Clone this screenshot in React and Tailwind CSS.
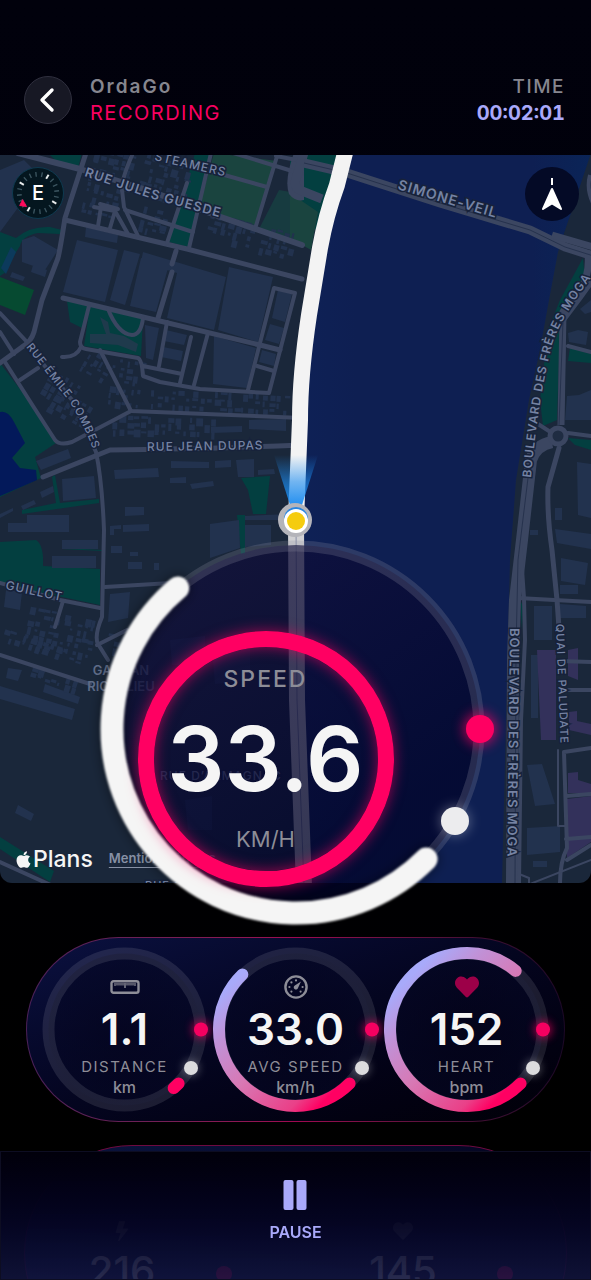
import { FaApple, FaHeart } from 'react-icons/fa'
import { BsLightningFill } from 'react-icons/bs'

const ROADS = [
  { w: 6, d: 'M18 153 L80 169 L150 191 L218 216 L302 245' },
  { w: 5, d: 'M86 153 L65 218 Q60 250 58 258 L42 300 L34 332 Q31 342 22 347 L0 363' },
  { w: 5, d: 'M65 220 L187 249 L302 279' },
  { w: 4, d: 'M133 153 Q121 180 122 190 L124 207 L138 236' },
  { w: 4, d: 'M125 210 L193 232' },
  { w: 4, d: 'M211 153 L189 248 M187 183 L167 243' },
  { w: 4, d: 'M203 169 L267 187 M233 153 L302 174 M278 153 L255 229 M276 156 L302 161' },
  { w: 4, d: 'M94 207 L115 211 L128 234 M100 204 L118 209 M101 207 L98 226 M115 211 L110 228' },
  { w: 5, d: 'M176 251 L172 264 M172 272 L158 318' },
  { w: 5, d: 'M63 298 L143 317 L260 345 L280 350' },
  { w: 4, d: 'M89 306 L80 342 Q80 348 86 349 L138 358 Q142 360 143 376 L160 382 L200 389 L269 393 L295 293 L274 288 L248 390' },
  { w: 4, d: 'M167 322 L159 366 M191 337 L180 383 M208 333 L194 385 M143 366 L182 374 M257 366 L274 371' },
  { w: 4, d: 'M108 309 Q118 334 132 335 Q141 335 143 318' },
  { w: 4, d: 'M81 347 Q76 358 62 357 M100 350 L131 411 L302 418' },
  { w: 4, d: 'M131 411 L72 442 Q60 446 55 440 L33 406 L5 362' },
  { w: 4, d: 'M0 313 L27 342 M20 380 L38 368 M0 332 L14 354' },
  { w: 4, d: 'M28 345 L72 400 L96 452 Q102 480 104 530 L102 617 Q94 636 98 644 L108 660' },
  { w: 5, d: 'M43 477 L110 450 Q200 449 302 445' },
  { w: 4, d: 'M105 587 L187 582 M0 583 L60 600 L100 608 M63 601 L55 627 M97 645 L127 630' },
  { w: 4, d: 'M0 655 L90 684 M0 862 L55 887' },
  { w: 5, d: 'M559 448 L548 487 Q547 515 552 550 L557 600 L559 628' },
  { w: 4, d: 'M518 598 L591 602 M568 433 L591 436 M560 661 L591 662 M563 690 L591 690' },
  { w: 4, d: 'M591 748 L564 752 L567 848 Q560 862 560 883 M567 860 L591 845 M566 796 L591 794 M566 839 L591 837' },
  { w: 4, d: 'M568 346 L591 352 M564 322 L562 420' },
  { w: 2, d: 'M519 874 L529 878 V884 M558 750 L558 826 L567 826 M530 884 L591 860' },
]

const BUILDINGS =
  'M77 240 L118 250 L105 302 L63 292Z M124 250 L140 254 L125 305 L110 300Z M141 258 L168 268 L156 312 L130 306Z ' +
  'M143 252 L226 277 L214 330 L167 318 L177 273 L141 262Z M229 267 L273 277 L258 342 L218 330Z M214 336 L256 348 L247 388 L213 384Z ' +
  'M86 227 L118 235 L117 243 L85 237Z M0 170 L24 160 L36 172 L20 205 L0 232Z M22 240 L34 236 L58 250 L45 270 L22 262Z ' +
  'M29 245 L50 252 L46 264 L27 258Z M33 265 L47 270 L45 277 L31 272Z M12 272 L25 277 L23 281 L10 277Z ' +
  'M278 290 L292 294 L285 322 L272 318Z M270 324 L284 328 L279 344 L265 340Z M262 350 L276 354 L274 366 L259 362Z ' +
  'M166 330 L187 335 L184 345 L164 341Z M163 347 L183 351 L181 361 L161 357Z M145 325 L159 328 L153 360 L146 358Z ' +
  'M114 470 L158 468 L159 477 L115 479Z M171 461 L209 462 L209 468 L171 468Z M215 461 L231 460 L231 467 L215 468Z ' +
  'M236 460 L254 459 L254 477 L238 477Z M258 470 L274 469 L275 474 L258 475Z M170 478 L186 477 L186 483 L170 483Z ' +
  'M190 484 L213 481 L214 486 L192 489Z M125 507 L144 507 L144 515 L125 516Z M123 525 L149 524 L149 531 L123 532Z ' +
  'M110 526 L121 525 L121 529 L114 529 L114 535 L110 535Z M210 524 L239 520 L240 548 L210 558Z M245 525 L271 525 L271 545 L245 547Z ' +
  'M245 516 L290 514 V520 H245Z M111 546 H122 V553 H111Z M130 552 H138 V556 H130Z M128 562 H142 V569 H128Z M154 563 H159 V570 H154Z ' +
  'M62 479 L94 476 L96 498 L63 501Z M36 461 L68 449 L71 458 L41 470Z M8 523 H27 V515 H69 V532 H8Z ' +
  'M52 556 H96 V568 H52Z M62 540 H98 V549 H62Z M40 492 L53 486 L54 492 L42 498Z M21 506 L34 500 L36 504 L23 510Z M0 514 L13 508 V511 L0 518Z ' +
  'M211 427 L242 426 V432 L211 433Z M249 420 L286 419 V431 L249 429Z M110 594 L130 592 L128 618 L108 622Z M6 590 L22 592 L20 610 L4 607Z ' +
  'M8 668 L22 670 L18 681 L6 678Z M45 684 L80 697 L78 704 L43 692Z M0 686 L75 709 L72 720 L0 699Z M18 805 L34 814 L31 821 L15 813Z ' +
  'M170 640 L205 636 V665 H172Z M212 650 L250 645 V680 L215 684Z M185 800 L212 796 V830 H188Z ' +
  'M577 462 L591 464 V518 L578 515Z M579 395 L591 390 V420 L565 420 L567 396Z M555 529 L591 534 V549 L557 543Z M561 558 L588 563 L585 585 L561 581Z ' +
  'M534 606 L552 606 V640 H534Z M560 604 L586 606 V618 H560Z M560 585 H578 V594 H560Z M555 508 H562 V520 H555Z M530 530 H538 V535 H530Z ' +
  'M527 765 L542 764 L555 804 L535 806Z M527 828 L560 826 V852 L527 855Z M533 861 H547 V867 H533Z M531 655 H538 V718 H531Z ' +
  'M568 333 L578 330 L588 332 L586 345 L569 342Z M580 309 L591 300 V312 L585 314Z'

const PURPLE =
  'M537 650 H556 V740 H541Z M568 650 L578 648 V680 L568 676Z M569 712 L577 711 V721 L591 724 V735 L569 730Z M568 773 L578 772 V780 L591 784 V793 H568Z M567 799 L591 796 V842 L567 858Z'

// rough city blocks: [x, y, width, height, rotation, seed]
const CLUSTERS = [
  [84, 184, 34, 32, 14, 3],
  [92, 150, 36, 32, 14, 8],
  [141, 158, 44, 38, 16, 5],
  [140, 208, 28, 24, 14, 4],
  [206, 222, 88, 22, 15, 7],
  [110, 360, 34, 45, 8, 1],
  [150, 392, 138, 18, 3, 2],
  [84, 352, 24, 26, 30, 9],
  [112, 416, 100, 20, 2, 6],
  [50, 396, 42, 26, 30, 11],
  [45, 375, 30, 24, 30, 12],
  [26, 612, 68, 40, 12, 13],
  [0, 640, 80, 14, 18, 14],
  [106, 635, 30, 20, 10, 15],
  [30, 672, 45, 14, 18, 16],
]

function clusterRects([x, y, w, h, , seed]) {
  const rects = []
  let n = seed * 97
  const next = () => {
    n = (n * 1103 + 12345) % 65536
    return n / 65536
  }
  for (let cy = y; cy < y + h; cy += 7) {
    for (let cx = x; cx < x + w; cx += 7) {
      if (next() < 0.72) {
        rects.push([cx + next() * 2, cy + next() * 2, 2 + next() * 5, 2 + next() * 6])
      }
    }
  }
  return rects
}

function polar(c, r, deg) {
  const a = (deg * Math.PI) / 180
  return [c + r * Math.cos(a), c + r * Math.sin(a)]
}

function arcPath(c, r, from, to) {
  const [x1, y1] = polar(c, r, from)
  const [x2, y2] = polar(c, r, to)
  return `M${x1} ${y1} A${r} ${r} 0 ${to - from > 180 ? 1 : 0} 1 ${x2} ${y2}`
}

function MapLabel({ id, d, size = 12, weight = 500, children }) {
  return (
    <>
      <path id={id} d={d} fill="none" />
      <text
        fontSize={size}
        fontWeight={weight}
        fill="#7583a3"
        stroke="#17223a"
        strokeWidth="3"
        paintOrder="stroke"
        letterSpacing="1"
      >
        <textPath href={`#${id}`}>{children}</textPath>
      </text>
    </>
  )
}

function MapArt() {
  return (
    <svg
      viewBox="0 155 591 728"
      preserveAspectRatio="xMidYMid slice"
      className="h-full w-full font-['Inter',sans-serif]"
      aria-hidden="true"
    >
      <defs>
        <linearGradient id="beam" x1="0" y1="1" x2="0" y2="0">
          <stop offset="0" stopColor="#1c8cf0" />
          <stop offset="0.5" stopColor="#1c8cf0" stopOpacity="0.6" />
          <stop offset="1" stopColor="#1c8cf0" stopOpacity="0" />
        </linearGradient>
        <linearGradient id="river" x1="0" x2="1">
          <stop offset="0" stopColor="#0e2156" />
          <stop offset="0.2" stopColor="#0e1f52" />
          <stop offset="0.8" stopColor="#0e1f52" />
          <stop offset="1" stopColor="#0a2457" />
        </linearGradient>
      </defs>
      <rect y="155" width="591" height="728" fill="#1a273a" />

      <g fill="#033f40">
        <path d="M48 153 L82 153 L78 168 L55 160Z" />
        <path d="M0 232 L16 238 Q30 226 50 227 L62 230 L60 234 L38 233 Q22 236 20 246 Q12 258 6 272 L0 276Z" />
        <path d="M195 153 L213 153 L189 247 L169 242Z" />
        <path d="M67 301 L88 306 L82 328 L70 322Z M90 306 L143 319 L141 356 L84 346Z" />
        <path d="M0 363 L36 410 L0 410Z M0 400 L30 400 L56 443 L35 457 L41 478 L0 497Z" />
        <path d="M55 475 L60 503 L99 499 V503 L22 514 V510 L56 503 L52 477Z" />
        <path d="M0 542 L36 540 Q44 545 43 566 L100 569 L100 605 L0 584Z M62 548 L102 550 V551 L62 549Z" />
        <path d="M241 478 L270 476 L266 514 L253 514 L248 490Z M237 515 L245 515 L245 554 L241 554Z" />
        <path d="M0 837 L54 871 L50 882 L0 849Z" />
        <path d="M300 153 L350 153 L322 205 L296 192Z M290 160 L324 200 L318 230 L290 222Z" />
        <path d="M583 258 L585 280 L566 302 L560 330 L557 420 L543 426 L540 400 L548 330 L560 300Z" />
        <path d="M570 348 L591 354 V363 L568 361Z M568 438 L591 440 V450 L575 445Z M520 600 L523 606 L522 630Z" />
      </g>
      <g fill="#1a443f">
        <path d="M214 153 L277 161 L256 227 L198 211Z" />
        <path d="M279 190 L302 194 V244 L259 229Z" fill="#173b40" />
        <path d="M290 193 L318 212 L311 250 L290 238Z" />
      </g>
      <path d="M0 277 L34 290 L25 315 L0 305Z" fill="#064a31" />
      <path d="M0 412 Q8 410 14 422 L25 443 L12 458 L20 468 L36 470 L37 480 L0 496Z" fill="#03195a" />
      <path d="M11 247 L16 252 L6 274 L1 268Z" fill="#0c3a5c" />
      <path d="M294 153 Q284 180 289 194 Q295 202 304 200 L304 153Z" fill="#3b4661" />

      <path d={BUILDINGS} fill="#22324e" />
      <g fill="#22324e">
        {CLUSTERS.map((c) => (
          <g key={c[5]} transform={`rotate(${c[4]} ${c[0] + c[2] / 2} ${c[1] + c[3] / 2})`}>
            {clusterRects(c).map(([x, y, w, h], i) => (
              <rect key={i} x={x} y={y} width={w} height={h} />
            ))}
          </g>
        ))}
      </g>
      <path d="M100 317 L108 322 L110 333 L124 336 L138 344 L136 352 L118 345 L90 343 L90 334 L106 334Z" fill="#1f3a4c" />
      <path d={PURPLE} fill="#33315b" />

      <g fill="none" stroke="#3b4661" strokeLinecap="round" strokeLinejoin="round">
        {ROADS.map((road) => (
          <path key={road.d} d={road.d} strokeWidth={road.w} />
        ))}
      </g>

      <path
        d="M350 153 H591 V165 L568 222 L558 252 L549 300 L540 350 L529 400 L516 480 L510 560 L508 640 L502 883 H305 L298 520 L302 400 L314 300 L328 220Z"
        fill="url(#river)"
      />
      <path d="M591 153 V250 L560 245 L568 222Z" fill="#1a273a" />

      <g fill="none" stroke="#3b4661" strokeLinejoin="round">
        <path d="M304 153 L295 182 Q295 189 302 191 L322 199" strokeWidth="9" />
        <path d="M304 163 L347 173 L440 203 L530 230 L565 247 L600 258" strokeWidth="9" />
        <path d="M552 235 L600 249" strokeWidth="7" />
        <path d="M590 175 Q586 190 594 205" strokeWidth="4" />
        <path d="M588 254 Q590 275 580 290 L563 312 L561 425" strokeWidth="7" />
        <path d="M600 270 L580 298 L562 322" strokeWidth="5" />
        <path d="M552 442 Q536 445 531 460 L522 540 L515 600 L513 660 L512 883" strokeWidth="12" />
        <path d="M520 540 L524 598 L525 640 L521 720 L519 883" strokeWidth="4" />
        <circle cx="558" cy="436" r="8" strokeWidth="5" fill="#1f2c42" />
        <path d="M538 424 L552 433" strokeWidth="4" />
      </g>
      <g fill="none" stroke="#26324d" strokeWidth="1">
        <path d="M304 163 L347 173 L440 203 L530 230 L565 247 L600 258" />
        <path d="M528 478 L518 560 L516 650 L515 883" />
        <path d="M563 322 L559 425" />
      </g>

      <MapLabel id="lbl-steamers" d="M154 160 L240 180">STEAMERS</MapLabel>
      <MapLabel id="lbl-guesde" d="M84 176 L150 198 L230 220" size={13} weight={600}>RUE JULES GUESDE</MapLabel>
      <MapLabel id="lbl-combes" d="M26 347 L60 390 Q80 412 97 460" size={11}>RUE ÉMILE COMBES</MapLabel>
      <MapLabel id="lbl-dupas" d="M147 451 L290 449" size={12}>RUE JEAN DUPAS</MapLabel>
      <MapLabel id="lbl-guillot" d="M5 589 L80 605" size={12}>GUILLOT</MapLabel>
      <MapLabel id="lbl-veil" d="M397 189 L530 228" size={14} weight={600}>SIMONE-VEIL</MapLabel>
      <MapLabel id="lbl-moga-n" d="M531 478 Q538 400 552 345 Q562 312 610 254" size={12} weight={600}>
        BOULEVARD DES FRÈRES MOGA
      </MapLabel>
      <MapLabel id="lbl-moga-s" d="M510 628 L507 880" size={13} weight={600}>
        BOULEVARD DES FRÈRES MOGA
      </MapLabel>
      <MapLabel id="lbl-quai" d="M556 624 L562 780" size={11}>QUAI DE PALUDATE</MapLabel>
      <MapLabel id="lbl-armagnac" d="M160 780 L290 780" size={12}>RUE D’ARMAGNAC</MapLabel>
      <MapLabel id="lbl-rue" d="M145 889 L260 889" size={11}>RUE OSCAR</MapLabel>
      <g fontSize="13" fontWeight="600" fill="#5f6c88" textAnchor="middle">
        <text x="121" y="675">GALLIAN</text>
        <text x="121" y="691">RICHELIEU</text>
      </g>

      <path d="M296 520 L297 700 L304 886" stroke="#d0d0d3" strokeWidth="16" fill="none" />
      <path d="M296 520 L297 700 L304 886" stroke="#8a90a8" strokeWidth="1" fill="none" />
      <path
        d="M347 145 L337 185 Q326 215 320 248 L309 315 Q300 375 300 420 L296 520"
        stroke="#f3f3f3"
        strokeWidth="16"
        fill="none"
      />
      <path d="M274 455 H318 L301 508 H291Z" fill="url(#beam)" />
      <circle cx="295" cy="520" r="17" fill="#b4b4ba" />
      <circle cx="296" cy="519" r="12" fill="#2a86e0" />
      <circle cx="296" cy="521" r="12" fill="#fff" />
      <circle cx="296" cy="521" r="9" fill="#f5cc0f" />
    </svg>
  )
}

function Compass() {
  const ticks = Array.from({ length: 20 }, (_, i) => i * 18 + 12)
  return (
    <button
      type="button"
      aria-label="Compass"
      className="relative grid size-[52px] place-items-center rounded-full border border-[#0e3a50] bg-[#04161f] text-xl font-medium text-white"
    >
      <svg viewBox="0 0 52 52" className="absolute inset-0" aria-hidden="true">
        {ticks.map((t, i) => (
          <path
            key={t}
            d="M26 4 V9"
            stroke={i % 5 === 1 ? '#e8ecec' : '#3c5560'}
            strokeWidth={i % 5 === 1 ? 2 : 1.4}
            transform={`rotate(${t} 26 26)`}
          />
        ))}
        <path d="M10 33 L14 40 L7 39Z" fill="#ff0a5c" stroke="#ff0a5c" />
      </svg>
      <span className="relative">E</span>
    </button>
  )
}

function SpeedDial() {
  return (
    <div className="absolute -bottom-[42px] left-1/2 size-[392px] -translate-x-1/2">
      <svg viewBox="0 0 392 392" className="h-full w-full overflow-visible" aria-hidden="true">
        <defs>
          <linearGradient id="disc" x1="0.3" y1="0" x2="0.8" y2="0.7">
            <stop offset="0" stopColor="#100e3a" />
            <stop offset="1" stopColor="#01042a" />
          </linearGradient>
          <filter id="soft" x="-20%" y="-20%" width="140%" height="140%">
            <feGaussianBlur stdDeviation="1" />
          </filter>
          <filter id="halo" x="-100%" y="-100%" width="300%" height="300%">
            <feGaussianBlur stdDeviation="6" />
          </filter>
        </defs>
        <circle cx="196" cy="196" r="184" fill="url(#disc)" opacity="0.75" />
        <circle cx="196" cy="196" r="183" fill="none" stroke="#8c8c9e" strokeOpacity="0.25" strokeWidth="11" />
        <path d={arcPath(196, 184, 45, 230)} fill="none" stroke="#000" strokeOpacity="0.4" strokeWidth="26" strokeLinecap="round" filter="url(#halo)" />
        <path d={arcPath(196, 184, 45, 230)} fill="none" stroke="#f5f5f5" strokeWidth="23" strokeLinecap="round" filter="url(#soft)" />
        <circle cx="380" cy="196" r="17" fill="#ff0062" opacity="0.6" filter="url(#halo)" />
        <circle cx="380" cy="196" r="14" fill="#ff0062" />
        <circle cx="355" cy="288" r="15" fill="#fff" opacity="0.3" filter="url(#halo)" />
        <circle cx="355" cy="288" r="14" fill="#ececee" />
      </svg>
      <div className="absolute top-[98px] left-[38px] flex size-64 flex-col items-center justify-center gap-5.5 rounded-full border-16 border-[#ff0062] shadow-[0_0_14px_rgba(255,0,98,0.6),inset_0_0_14px_rgba(255,0,98,0.6)]">
        <p className="text-[23px] leading-7 font-medium tracking-[2px] text-[#8d8d97]">SPEED</p>
        <p className="text-[90px] leading-[88px] font-semibold text-[#f5f5f5]">33.6</p>
        <p className="text-[22px] leading-7 text-[#8d8d97]">KM/H</p>
      </div>
    </div>
  )
}

function RulerIcon() {
  return (
    <svg viewBox="0 0 30 14" className="h-[14px] w-[30px]" fill="none" stroke="#8d8d97" aria-hidden="true">
      <rect x="1.5" y="1.2" width="27" height="11.6" rx="2" strokeWidth="2.4" />
      <path d="M5 3 V6 M7 3 V5.500 M9 3 V5.500 M11 3 V5.500 M13 3 V5.500 M17 3 V5.500 M19 3 V5.500 M21 3 V5.500 M23 3 V5.500 M25 3 V6" strokeWidth="1.2" />
      <path d="M15 3 V8" strokeWidth="1.4" />
    </svg>
  )
}

function GaugeIcon() {
  return (
    <svg viewBox="0 0 24 24" className="size-6" fill="#8d8d97" aria-hidden="true">
      <circle cx="12" cy="12" r="10.6" fill="none" stroke="#8d8d97" strokeWidth="2.4" />
      <path d="M17 6.5 L14 13 A2.2 2.2 0 1 1 10.800 10.4Z" />
      <circle cx="12" cy="5.4" r="1.1" />
      <circle cx="7.4" cy="7.4" r="1.1" />
      <circle cx="5.4" cy="12" r="1.1" />
      <circle cx="18.600" cy="12" r="1.1" />
      <circle cx="7.4" cy="16.6" r="1.1" />
      <circle cx="16.6" cy="16.6" r="1.1" />
    </svg>
  )
}

const STATS = [
  { label: 'DISTANCE', value: '1.1', unit: 'km', end: 50, icon: <RulerIcon /> },
  { label: 'AVG SPEED', value: '33.0', unit: 'km/h', end: 226, icon: <GaugeIcon /> },
  { label: 'HEART', value: '152', unit: 'bpm', end: 310, icon: <FaHeart className="size-6 text-[#9c0048]" /> },
]

function StatDial({ stat }) {
  return (
    <div className="relative size-[165px]">
      <svg viewBox="0 0 165 165" className="absolute inset-0 overflow-visible" aria-hidden="true">
        <defs>
          <linearGradient id="arc" gradientUnits="userSpaceOnUse" x1="28" y1="28" x2="137" y2="137">
            <stop offset="0" stopColor="#a8aafa" />
            <stop offset="0.2" stopColor="#c092d8" />
            <stop offset="0.5" stopColor="#d878b4" />
            <stop offset="0.84" stopColor="#ea4088" />
            <stop offset="0.96" stopColor="#ff0062" />
          </linearGradient>
          <filter id="glow" x="-100%" y="-100%" width="300%" height="300%">
            <feGaussianBlur stdDeviation="4" />
          </filter>
          <radialGradient id="face">
            <stop offset="0" stopColor="#04041c" />
            <stop offset="1" stopColor="#050724" />
          </radialGradient>
        </defs>
        <circle cx="82.5" cy="82.5" r="76" fill="url(#face)" fillOpacity="0.6" stroke="#fff" strokeOpacity="0.1" strokeWidth="12" />
        <path d={arcPath(82.5, 76.5, 45, stat.end)} fill="none" stroke="url(#arc)" strokeWidth="12" strokeLinecap="round" />
        <circle cx="159" cy="82.5" r="9" fill="#ff0062" opacity="0.6" filter="url(#glow)" />
        <circle cx="159" cy="82.5" r="7" fill="#f50060" />
        <circle cx="149" cy="121" r="8" fill="#fff" opacity="0.3" filter="url(#glow)" />
        <circle cx="149" cy="121" r="7" fill="#dcdcde" />
      </svg>
      <div className="relative flex flex-col items-center pt-7 text-[#8d8d97]">
        <span className="grid h-6 place-items-center">{stat.icon}</span>
        <p className="mt-2 text-[44px] leading-[44px] font-semibold text-[#f5f5f5]">{stat.value}</p>
        <p className="mt-1.5 text-[15px] leading-5 tracking-[1.5px]">{stat.label}</p>
        <p className="text-base leading-5 font-medium">{stat.unit}</p>
      </div>
    </div>
  )
}

function NextDial({ value, icon }) {
  return (
    <div className="relative size-[194px] rounded-full">
      <span className="absolute top-[120px] -right-[13px] size-4 rounded-full bg-[#ff0062]" />
      <div className="flex flex-col items-center pt-[75px]">
        {icon}
        <p className="mt-2 text-[40px] leading-[44px] font-medium text-[#f5f5f5]">{value}</p>
      </div>
    </div>
  )
}

export default function App() {
  return (
    <main className="relative h-screen overflow-hidden bg-linear-to-b from-[#01010c] via-[#00000a] to-black font-['Inter',sans-serif] text-white">
      <header className="flex items-center gap-4.5 pt-[74px] pr-[26px] pb-[29px] pl-6">
        <button
          type="button"
          aria-label="Back"
          className="grid size-12 place-items-center rounded-full border border-[#2f2f3e] bg-[#171824]"
        >
          <svg viewBox="0 0 24 28" className="h-7 w-6" fill="none" stroke="#fff" strokeWidth="3.4" strokeLinecap="round" strokeLinejoin="round" aria-hidden="true">
            <path d="M16 4 L6 14 L16 24" />
          </svg>
        </button>
        <div className="flex-1">
          <h1 className="text-[19px] leading-[26px] font-semibold tracking-[2px] text-[#86868f]">OrdaGo</h1>
          <p className="text-xl leading-[26px] tracking-[1.5px] text-[#f80060]">RECORDING</p>
        </div>
        <div className="text-right">
          <p className="text-[19px] leading-[26px] font-medium tracking-[1.5px] text-[#86868f]">TIME</p>
          <p className="text-xl leading-[26px] font-bold tabular-nums text-[#a9a9fa]">00:02:01</p>
        </div>
      </header>

      <section className="relative h-[728px]">
        <div className="h-full overflow-hidden rounded-b-xl">
          <MapArt />
        </div>
        <div className="absolute inset-x-0 top-0 flex items-start justify-between p-3">
          <Compass />
          <button type="button" aria-label="Follow heading" className="grid size-[54px] place-items-center rounded-full bg-[#040a26]">
            <svg viewBox="0 0 24 34" className="h-[34px] w-6" aria-hidden="true">
              <path d="M12 1 V8" stroke="#fff" strokeWidth="2" />
              <path d="M12 12 L21 32 L12 26.500 L3 32Z" fill="#fff" stroke="#fff" strokeWidth="2" strokeLinejoin="round" />
            </svg>
          </button>
        </div>
        <div className="absolute inset-x-0 bottom-0 flex items-center px-3.5 pb-2.5">
          <FaApple className="size-[19px] text-[#f5f5f5]" />
          <span className="text-[23px] leading-7 font-medium text-[#f5f5f5]">Plans</span>
          <a href="#legal" className="ml-4 text-[13px] font-semibold text-[#8791a5] underline underline-offset-4">
            Mentions légales
          </a>
        </div>
        <SpeedDial />
      </section>

      <section className="mx-[26px] mt-[54px] flex justify-between rounded-full bg-linear-to-r from-[#4a2058] via-[#a00850] via-50% to-[#1c0826] p-px">
        <div className="flex w-full items-center justify-between rounded-full bg-linear-to-br from-[#0b1140] via-[#04051f] to-[#010008] px-[15px] py-2.25">
          {STATS.map((stat) => (
            <StatDial key={stat.label} stat={stat} />
          ))}
        </div>
      </section>

      <section className="mx-6 mt-[23px] flex justify-between rounded-[112px] border border-[#6e0a40] bg-linear-to-r from-[#0b1540] to-[#04051f] pr-[66px] pb-5">
        <NextDial value="216" icon={<BsLightningFill className="size-5 text-[#8d8d97]" />} />
        <NextDial value="145" icon={<FaHeart className="size-5 text-[#8d8d97]" />} />
      </section>

      <footer className="fixed inset-x-0 bottom-0 flex justify-center border border-[#0d0d22] bg-linear-to-b from-[#01000b] via-[#04041f]/97 to-[#11143c]/90">
        <button type="button" className="flex flex-col items-center gap-3 px-8 pt-7 pb-[37px] text-base leading-5 font-semibold text-[#a9a9fa]">
          <svg viewBox="0 0 24 30" className="h-[30px] w-6" fill="#a9a9fa" aria-hidden="true">
            <rect x="0.500" width="10" height="30" rx="2" />
            <rect x="13.500" width="10" height="30" rx="2" />
          </svg>
          PAUSE
        </button>
      </footer>
    </main>
  )
}
